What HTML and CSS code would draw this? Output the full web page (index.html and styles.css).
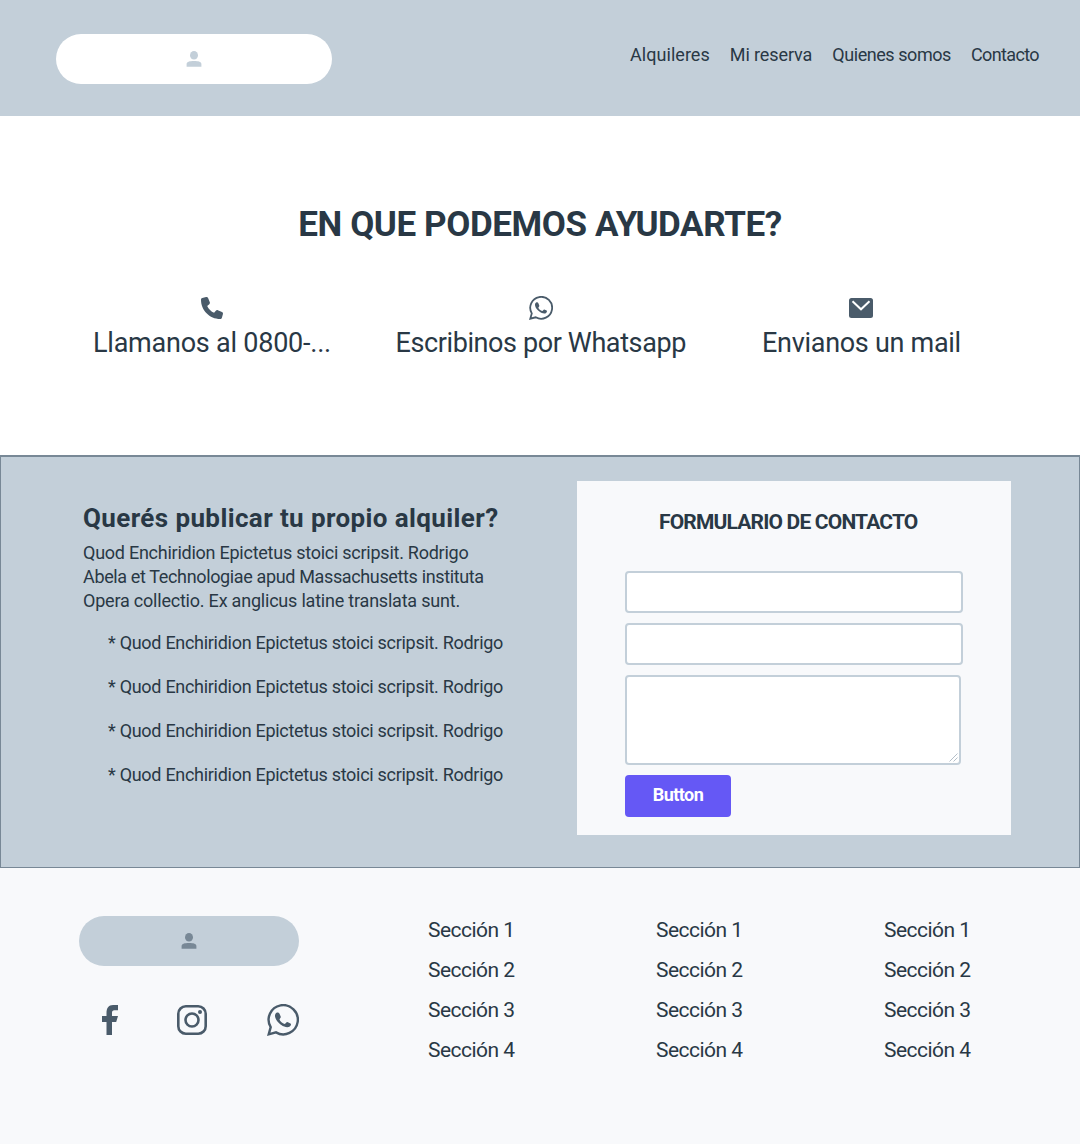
FILE: index.html
```html
<!DOCTYPE html>
<html lang="es">
<head>
<meta charset="utf-8">
<title>Alquileres</title>
<link rel="stylesheet" href="styles.css">
</head>
<body>
<svg class="sprite" aria-hidden="true">
  <symbol id="user" viewBox="0 0 16 16"><ellipse cx="8" cy="4.3" rx="4" ry="4.3"/><path d="M.6 15.7v-2.6C.6 10.8 3.500 10 8 10s7.400.8 7.400 3.100v2.600z"/></symbol>
  <symbol id="whatsapp" viewBox="0 0 32 32"><path d="M1.700 30.300 3.700 23.200A14.600 14.600 0 1 1 9 28.400Z" fill="none" stroke="currentColor" stroke-width="2.400"/><path d="M9.500 8.700C11 8 12 8.600 12.500 9.800L13.700 12.600C14.100 13.800 12.600 14.600 12.500 15.600C13.300 17.800 15.400 19.300 17.600 19.900C18.900 19.900 19 18 20.400 18L23.500 19.400C24.500 20 23.900 21.600 22.800 22.600C20.500 24.200 17 23 14.300 21.100C11.500 19 8.400 15.700 8 12.200C7.900 10.700 8.500 9.300 9.500 8.700Z"/></symbol>
</svg>
<header class="top">
  <a class="logo" href="#"><svg class="user"><use href="#user"/></svg></a>
  <nav class="nav">
    <a class="rentals">Alquileres</a><a class="booking">Mi reserva</a><a class="about">Quienes somos</a><a class="contact">Contacto</a>
  </nav>
</header>
<section class="help">
  <h1 class="help-title">EN QUE PODEMOS AYUDARTE?</h1>
  <div class="channels">
    <div class="channel phone"><svg viewBox="0 0 512 512"><path d="M164.900 24.600c-7.700-18.600-28-28.500-47.400-23.200l-88 24C12.100 30.200 0 46 0 64C0 311.400 200.600 512 448 512c18 0 33.800-12.100 38.600-29.500l24-88c5.300-19.400-4.600-39.700-23.200-47.400l-96-40c-16.300-6.800-35.200-2.100-46.300 11.600L304.700 368C234.300 334.700 177.300 277.700 144 207.300L193.300 167c13.700-11.200 18.400-30 11.600-46.300l-40-96z"/></svg><span>Llamanos al 0800-...</span></div>
    <div class="channel chat"><svg><use href="#whatsapp"/></svg><span>Escribinos por Whatsapp</span></div>
    <div class="channel mail"><svg viewBox="0 0 24 24"><rect y="2" width="24" height="20" rx="2.500"/><path class="flap" d="M3.500 5.300 12 13.300 20.500 5.300"/></svg><span>Envianos un mail</span></div>
  </div>
</section>
<section class="publish">
  <div class="pitch">
    <h2>Querés publicar tu propio alquiler?</h2>
    <p><span class="line-a">Quod Enchiridion Epictetus stoici scripsit. Rodrigo</span><span class="line-b">Abela et Technologiae apud Massachusetts instituta</span><span class="line-c">Opera collectio. Ex anglicus latine translata sunt.</span></p>
    <ul>
      <li>* Quod Enchiridion Epictetus stoici scripsit. Rodrigo</li>
      <li>* Quod Enchiridion Epictetus stoici scripsit. Rodrigo</li>
      <li>* Quod Enchiridion Epictetus stoici scripsit. Rodrigo</li>
      <li>* Quod Enchiridion Epictetus stoici scripsit. Rodrigo</li>
    </ul>
  </div>
  <form class="form">
    <h3>FORMULARIO DE CONTACTO</h3>
    <input type="text" aria-label="Nombre">
    <input type="text" aria-label="Email">
    <div class="message">
      <textarea aria-label="Mensaje"></textarea>
      <svg class="grip" viewBox="0 0 9 9"><path d="M.5 8.500 8.500.5M4.500 8.500 8.500 4.500"/></svg>
    </div>
    <button type="button">Button</button>
  </form>
</section>
<footer class="footer">
  <div class="brand">
    <a class="logo" href="#"><svg class="user"><use href="#user"/></svg></a>
    <div class="social">
      <svg class="fb" viewBox="0 0 16 30"><path d="M4.500 30V17H0V11H4.500V8C4.500 3 6.500 0 11 0h5v5.200h-3.600C10.600 5.200 10 6.200 10 8v3h6l-1.800 6H10v13z"/></svg>
      <svg class="ig" viewBox="0 0 30 30"><rect x="1.300" y="1.300" width="27.400" height="27.400" rx="7.500"/><circle cx="15" cy="15" r="6.500"/><circle class="dot" cx="23" cy="7" r="2"/></svg>
      <svg class="wa"><use href="#whatsapp"/></svg>
    </div>
  </div>
  <ul><li>Sección 1</li><li>Sección 2</li><li>Sección 3</li><li>Sección 4</li></ul>
  <ul><li>Sección 1</li><li>Sección 2</li><li>Sección 3</li><li>Sección 4</li></ul>
  <ul><li>Sección 1</li><li>Sección 2</li><li>Sección 3</li><li>Sección 4</li></ul>
</footer>
</body>
</html>
```
FILE: styles.css
```css
* { box-sizing: border-box; }
body { margin: 0; background: #f8f9fb; color: #293845; font-family: Roboto, "Liberation Sans", sans-serif; font-size: 18px; line-height: 24px; }
h1, h2, h3, p, ul { margin: 0; padding: 0; }
ul { list-style: none; }
svg { display: block; fill: currentColor; }
.sprite { position: absolute; width: 0; height: 0; }

/* Header */
.top { height: 116px; padding: 34px 41px 0 56px; display: flex; justify-content: space-between; background: #c3cfd9; }
.logo { display: flex; align-items: center; justify-content: center; width: 276px; height: 50px; border-radius: 25px; background: #fff; color: #c3cfd9; }
.user { width: 16px; height: 16px; }
.nav { display: flex; gap: 20px; padding-top: 9px; white-space: nowrap; }
.rentals { letter-spacing: 0.04px; }
.booking { letter-spacing: -0.1px; }
.about { letter-spacing: -0.44px; }
.contact { letter-spacing: -0.62px; }

/* Contact channels */
.help { height: 339px; background: #fff; padding-top: 85px; }
.help-title { font-size: 35px; line-height: 48px; text-align: center; letter-spacing: -0.41px; }
.channels { display: flex; padding: 47px 0 0 93px; font-size: 27px; line-height: 32px; white-space: nowrap; }
.channel { display: flex; flex-direction: column; align-items: center; gap: 7px; }
.channel svg { width: 24px; height: 24px; color: #4a5b6a; }
.channel.phone svg { padding: 1px; }
.phone { letter-spacing: -0.23px; margin-right: 64.500px; }
.chat { letter-spacing: -0.39px; margin-right: 76px; }
.mail { letter-spacing: -0.29px; }
.flap { fill: none; stroke: #fff; stroke-width: 2; }

/* Publish your rental */
.publish { height: 413px; display: flex; border: 1px solid #788896; border-top-width: 2px; background: #c3cfd9; padding: 24px 68px 0 82px; justify-content: space-between; }
.pitch { white-space: nowrap; }
.pitch h2 { font-size: 26px; line-height: 32px; padding-top: 21px; margin-bottom: 7px; letter-spacing: 0.39px; }
.pitch p span { display: block; }
.line-a { letter-spacing: -0.25px; }
.line-b { letter-spacing: -0.36px; }
.line-c { letter-spacing: -0.21px; }
.pitch ul { display: flex; flex-direction: column; gap: 20px; padding: 18px 0 0 25px; letter-spacing: -0.29px; }
.form { width: 434px; height: 354px; padding: 28px 48px 0; background: #f8f9fb; display: flex; flex-direction: column; align-items: flex-start; gap: 10px; }
.form h3 { font-size: 21px; line-height: 26px; padding-left: 34px; margin-bottom: 26px; letter-spacing: -0.82px; white-space: nowrap; }
.form input { width: 338px; height: 42px; border: 2px solid #c3cfd9; border-radius: 4px; }
.message { position: relative; width: 336px; height: 90px; }
.message textarea { display: block; width: 100%; height: 100%; border: 2px solid #c3cfd9; border-radius: 4px; resize: none; }
.grip { position: absolute; right: 3px; bottom: 3px; width: 9px; height: 9px; fill: none; stroke: #b4bfc9; }
.form button { width: 106px; height: 42px; padding: 0 0 2px; border: 0; border-radius: 4px; background: #6558f5; color: #fff; font: 700 18px/24px Roboto, sans-serif; letter-spacing: -0.55px; }

/* Footer */
.footer { display: flex; height: 276px; padding: 42px 0 0 79px; font-size: 21px; line-height: 40px; letter-spacing: -0.53px; }
.footer ul { flex: none; width: 228px; }
.brand { flex: none; width: 349px; padding-top: 6px; }
.footer ul:last-child { width: 170px; }
.brand .logo { width: 220px; background: #c3cfd9; color: #788896; }
.social { display: flex; align-items: center; color: #4a5b6a; padding: 38px 0 0 23px; }
.fb { width: 16px; height: 30px; margin-right: 59px; }
.ig { width: 30px; height: 30px; margin-right: 60px; fill: none; stroke: currentColor; stroke-width: 2.6; }
.ig .dot { fill: currentColor; stroke: none; }
.wa { width: 32px; height: 32px; }
```
